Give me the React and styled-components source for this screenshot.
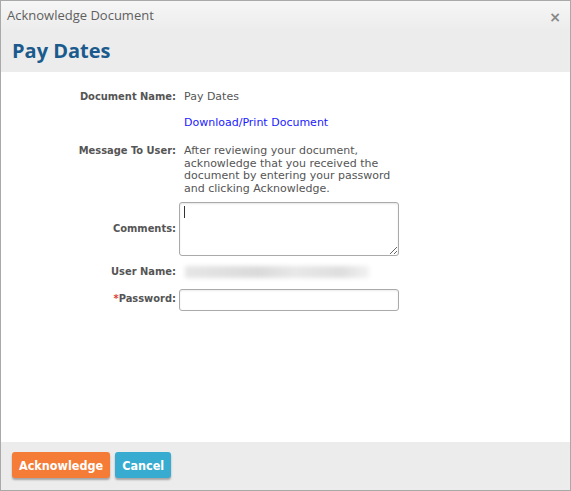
import React from 'react'
import styled, { createGlobalStyle } from 'styled-components'

const Global = createGlobalStyle`
  html, body {
    margin: 0;
    padding: 0;
    background: #fff;
  }
  * {
    box-sizing: border-box;
  }
`

const Dialog = styled.div`
  width: 571px;
  height: 491px;
  border: 1px solid #a9a9a9;
  display: flex;
  flex-direction: column;
  background: #fff;
  font-family: 'DejaVu Sans Condensed', 'DejaVu Sans', sans-serif;
`

const Header = styled.div`
  background: linear-gradient(#f6f6f6, #ececec 30px, #ececec);
  height: 71px;
  display: flex;
  flex-direction: column;
`

const TitleBar = styled.div`
  height: 28px;
  display: flex;
  align-items: center;
  justify-content: space-between;
  padding: 0 9px 0 6px;
`

const Title = styled.span`
  font-family: 'Open Sans', sans-serif;
  font-size: 13px;
  color: #5f5f5f;
`

const Close = styled.span`
  font-family: 'DejaVu Sans', sans-serif;
  font-size: 14px;
  font-weight: bold;
  color: #888;
  margin-top: 4px;
`

const Heading = styled.h1`
  margin: 8px 0 0 11px;
  font-family: 'Open Sans', sans-serif;
  font-size: 20px;
  font-weight: 700;
  color: #1b5a8d;
  line-height: 28px;
`

const Content = styled.div`
  flex: 1;
  padding-top: 19px;
  display: grid;
  grid-template-columns: 175px 220px;
  column-gap: 3px;
  align-content: start;
  font-size: 11px;
  line-height: 12.5px;
  color: #555;
`

const Label = styled.div`
  text-align: right;
  font-weight: bold;
  color: #555;
  margin-top: ${(p) => p.$top || 0}px;
  align-self: ${(p) => (p.$center ? 'center' : 'start')};
`

const Value = styled.div`
  padding-left: 5px;
  font-family: 'DejaVu Sans', sans-serif;
  font-size: 11px;
  margin-top: ${(p) => p.$top || 0}px;
`

const Link = styled.a`
  color: #1a1aff;
  text-decoration: none;
`

const Star = styled.span`
  color: #e0403a;
`

const Field = styled.div`
  position: relative;
  margin-top: ${(p) => p.$top || 0}px;
`

const TextArea = styled.textarea`
  width: 220px;
  height: 54px;
  border: 1px solid #aaa;
  border-radius: 3px;
  box-shadow: inset 0 1px 2px rgba(0, 0, 0, 0.1);
  font-family: inherit;
  font-size: 11px;
  padding: 3px 4px;
  outline: none;
  display: block;
`

const Caret = styled.span`
  position: absolute;
  left: 5px;
  top: 4px;
  width: 1px;
  height: 12px;
  background: #333;
`

const Input = styled.input`
  margin-top: ${(p) => p.$top || 0}px;
  width: 220px;
  height: 22px;
  border: 1px solid #aaa;
  border-radius: 3px;
  box-shadow: inset 0 1px 2px rgba(0, 0, 0, 0.08);
  font-size: 11px;
  outline: none;
  display: block;
`

const Blurred = styled.div`
  margin-top: ${(p) => p.$top || 0}px;
  margin-left: 6px;
  width: 184px;
  height: 12px;
  background: linear-gradient(90deg, #e6e6e6, #dadada 40%, #e8e8e8 60%, #dedede 85%, #f2f2f2);
  filter: blur(2px);
  align-self: center;
`

const Footer = styled.div`
  height: 48px;
  background: #ececec;
  display: flex;
  gap: 5px;
  padding: 10px 0 0 11px;
`

const Button = styled.button`
  height: 26px;
  padding: 0 7px;
  border: none;
  border-radius: 3px;
  background: ${(p) => p.$bg};
  color: #fff;
  font-family: 'DejaVu Sans Condensed', 'DejaVu Sans', sans-serif;
  font-weight: bold;
  font-size: 12.5px;
  box-shadow: 0 2px 2px rgba(0, 0, 0, 0.3);
`

export default function App() {
  return (
    <>
      <Global />
      <Dialog>
        <Header>
          <TitleBar>
            <Title>Acknowledge Document</Title>
            <Close>×</Close>
          </TitleBar>
          <Heading>Pay Dates</Heading>
        </Header>
        <Content>
          <Label>Document Name:</Label>
          <Value>Pay Dates</Value>

          <Label $top={13} />
          <Value $top={13}>
            <Link href="#">Download/Print Document</Link>
          </Value>

          <Label $top={16}>Message To User:</Label>
          <Value $top={16}>
            After reviewing your document, acknowledge that you received the document by
            entering your password and clicking Acknowledge.
          </Value>

          <Label $top={7} $center>Comments:</Label>
          <Field $top={7}>
            <TextArea />
            <Caret />
          </Field>

          <Label $top={10}>User Name:</Label>
          <Blurred $top={10} />

          <Label $top={10} $center>
            <Star>*</Star>Password:
          </Label>
          <Input $top={10} type="password" />
        </Content>
        <Footer>
          <Button $bg="#f47c36">Acknowledge</Button>
          <Button $bg="#38acd0">Cancel</Button>
        </Footer>
      </Dialog>
    </>
  )
}
